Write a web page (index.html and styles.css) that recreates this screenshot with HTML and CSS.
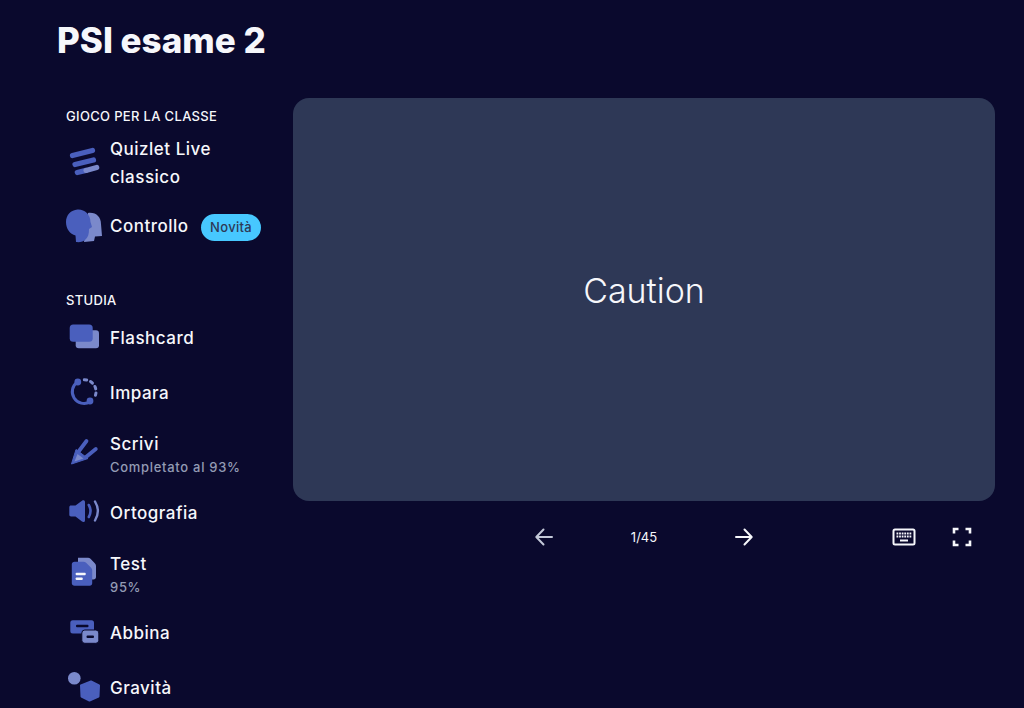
FILE: index.html
```html
<!DOCTYPE html>
<html lang="it">

<head>
  <meta charset="UTF-8">
  <meta name="viewport" content="width=device-width, initial-scale=1.0">
  <title>PSI esame 2</title>
  <link rel="stylesheet" href="styles.css">
</head>

<body>
  <h1 class="set-title">PSI esame 2</h1>

  <div class="layout">
    <nav class="sidebar">
      <div class="section">
        <div class="section-label">GIOCO PER LA CLASSE</div>
        <a href="#" class="mode mode-tall">
          <svg class="mode-icon" viewBox="0 0 36 34">
            <path class="stroke-dark" stroke-width="5.200" stroke-linecap="round" d="M6.500 9.500 26.500 4.500"/>
            <path class="stroke-dark" stroke-width="5.200" stroke-linecap="round" d="M9 18.500 27.500 14"/>
            <path class="stroke-dark" stroke-width="5.200" stroke-linecap="round" d="M11.300 26.500 20 24.400"/>
            <path class="stroke-light" stroke-width="5.200" stroke-linecap="round" d="M20 24.400 30.700 21.500"/>
          </svg>
          <span class="mode-name">Quizlet Live<br>classico</span>
        </a>
        <a href="#" class="mode">
          <svg class="mode-icon" viewBox="0 0 36 34">
            <path class="fill-light" d="M22 4c8-1 13 4 13 11l1 12-7 .5-1 4.500-10 1z"/>
            <path class="fill-dark" d="M11.500 .5c7-.5 13 5 13 12.500l1.500 5-3 2c0 5-1 8-3 10-2.500 3-7 3.500-10 3l-.5-6.500C4 25 0 20 0 13 0 6 5 1 11.500 .5z"/>
          </svg>
          <span class="mode-name">Controllo</span>
          <span class="badge">Novità</span>
        </a>
      </div>

      <div class="section section-study">
        <div class="section-label">STUDIA</div>
        <a href="#" class="mode">
          <svg class="mode-icon" viewBox="0 0 36 34">
            <rect class="fill-light" x="9.700" y="9.200" width="23.300" height="18" rx="3"/>
            <rect class="fill-dark" x="3.700" y="3.500" width="23" height="17.300" rx="3.500"/>
          </svg>
          <span class="mode-name">Flashcard</span>
        </a>
        <a href="#" class="mode">
          <svg class="mode-icon" viewBox="0 0 36 34">
            <path class="stroke-dark" stroke-width="3" d="M11.500 5.900A11.800 11.800 0 0 0 24 25.900"/>
            <circle class="fill-dark" cx="11.800" cy="6" r="3.400"/>
            <circle class="fill-dark" cx="24" cy="25" r="3.400"/>
            <path class="stroke-light" stroke-width="3" stroke-linecap="round" stroke-dasharray="2.500 4" d="M18.300 3.800A11.800 11.800 0 0 1 29.200 20"/>
          </svg>
          <span class="mode-name">Impara</span>
        </a>
        <a href="#" class="mode mode-sub">
          <svg class="mode-icon" viewBox="0 0 36 34">
            <path class="stroke-dark" stroke-width="3.800" stroke-linecap="round" d="M20.500 5 13 15M29.800 13 20 21"/>
            <path class="fill-dark" stroke="#4a5fbd" stroke-width="1" stroke-linejoin="round" d="M5.500 28 10 13.500 22 22.500z"/>
            <path class="fill-light" d="M8.500 25.500 11.500 18 17.500 22.500z"/>
          </svg>
          <span class="mode-text">
            <span class="mode-name">Scrivi</span>
            <span class="mode-progress">Completato al 93%</span>
          </span>
        </a>
        <a href="#" class="mode">
          <svg class="mode-icon" viewBox="0 0 36 34">
            <path class="fill-dark" d="M5 9.500h4.500L16 4.800c1.300-1 3-.4 3 1.400v18c0 1.800-1.700 2.400-3 1.400L9.500 20.500H5c-1 0-1.700-.7-1.700-1.700v-7.600C3.300 10.200 4 9.500 5 9.500z"/>
            <path class="stroke-dark" stroke-width="2.600" stroke-linecap="round" d="M22.800 9c2.300 4 2.300 8 0 12"/>
            <path class="stroke-light" stroke-width="2.400" stroke-linecap="round" d="M29 5.500c3.800 6.300 3.800 12.700 0 19"/>
          </svg>
          <span class="mode-name">Ortografia</span>
        </a>
        <a href="#" class="mode mode-sub">
          <svg class="mode-icon" viewBox="0 0 36 34">
            <path class="fill-light" d="M12 1.800h10c1 0 1.800.4 2.500 1l4.300 4.400c.8.800 1.200 1.800 1.200 2.800V21c0 1.500-1 2.500-2.500 2.500H12z"/>
            <path class="fill-dark" d="M8.500 5.700h9c1 0 1.900.4 2.600 1l5 5c.7.700 1.100 1.600 1.100 2.600v12.900c0 1.500-1 2.500-2.500 2.500H8.500c-1.500 0-2.700-1-2.700-2.500V8.200c0-1.500 1.200-2.500 2.700-2.500z"/>
            <rect class="fill-white" x="9.700" y="16.800" width="10" height="2.500" rx=".8"/>
            <rect class="fill-white" x="9.700" y="21.500" width="7" height="2.500" rx=".8"/>
          </svg>
          <span class="mode-text">
            <span class="mode-name">Test</span>
            <span class="mode-progress">95%</span>
          </span>
        </a>
        <a href="#" class="mode">
          <svg class="mode-icon" viewBox="0 0 36 34">
            <rect class="fill-dark" x="4.300" y="4.200" width="23.700" height="13.300" rx="2.500"/>
            <rect class="fill-bg" x="10" y="8.700" width="12.500" height="2.600" rx="1"/>
            <rect class="fill-light" stroke="#0a092d" stroke-width="1" x="15.800" y="14" width="17" height="13.300" rx="3"/>
            <rect class="fill-bg" x="20.500" y="19.500" width="7.500" height="2.600" rx="1"/>
          </svg>
          <span class="mode-name">Abbina</span>
        </a>
        <a href="#" class="mode">
          <svg class="mode-icon" viewBox="0 0 36 34">
            <circle class="fill-light" cx="8.300" cy="7.200" r="6.300"/>
            <path class="fill-dark" stroke="#4a5fbd" stroke-width="2" stroke-linejoin="round" d="M25 10.500 33 14.500 32.500 25.500 23.500 29.500 15.500 25.500 15 14.500z"/>
          </svg>
          <span class="mode-name">Gravità</span>
        </a>
      </div>
    </nav>

    <main class="viewer">
      <div class="card">Caution</div>
      <div class="controls">
        <div class="controls-left"></div>
        <div class="pager">
          <button class="icon-btn dim" type="button">
            <svg width="24" height="24" viewBox="0 0 24 24"><path d="M20 12H4.500M11.500 4.500 4.300 12l7.200 7.500"/></svg>
          </button>
          <span class="pager-count">1/45</span>
          <button class="icon-btn" type="button">
            <svg width="24" height="24" viewBox="0 0 24 24"><path d="M4 12h15.500M12.500 4.500l7.200 7.500-7.200 7.500"/></svg>
          </button>
        </div>
        <div class="tools">
          <button class="icon-btn" type="button">
            <svg width="24" height="24" viewBox="0 0 24 24">
              <rect x="1.500" y="4.500" width="21" height="15" rx="1.500" stroke-width="2"/>
              <path class="keys" stroke-width="2" stroke-dasharray="1.800 .8" d="M4.500 8.500h15M4.500 11.500h15"/>
              <path class="keys" stroke-width="2" d="M8 15.500h8"/>
            </svg>
          </button>
          <button class="icon-btn" type="button">
            <svg width="24" height="24" viewBox="0 0 24 24"><path class="thick" d="M4 8.500V4h4.500M15.500 4H20v4.500M20 15.500V20h-4.500M8.500 20H4v-4.500"/></svg>
          </button>
        </div>
      </div>
    </main>
  </div>
</body>

</html>
```

FILE: styles.css
```css
/* page */
html,
body {
  height: 100%;
}

body {
  font-family: Inter, Arial, sans-serif;
  background-color: #0a092d;
  color: #f6f7fb;
  margin: 0;
  overflow: hidden;
}

.set-title {
  font-size: 35px;
  font-weight: 800;
  line-height: 40px;
  margin: 0;
  padding: 20px 0 0 57px;
}

.layout {
  display: grid;
  grid-template-columns: 227px 702px;
  margin-left: 66px;
  margin-top: 38px;
}

/* sidebar */
.sidebar {
  padding-top: 7px;
}

.section-label {
  font-size: 13px;
  font-weight: 500;
  line-height: 22px;
  letter-spacing: 0.33px;
}

.section-study {
  margin-top: 36px;
}

.section-study .section-label {
  margin-bottom: -1px;
}

.mode {
  display: flex;
  align-items: center;
  gap: 8px;
  height: 55px;
  color: #f6f7fb;
  text-decoration: none;
}

.mode-tall {
  height: 71px;
}

.mode-sub {
  height: 65px;
}

.mode-icon {
  width: 36px;
  height: 34px;
  flex: none;
  overflow: visible;
}

.mode-name {
  font-size: 17px;
  font-weight: 500;
  line-height: 28px;
  letter-spacing: 0.5px;
}

.mode-text {
  display: flex;
  flex-direction: column;
  padding-top: 4px;
}

.mode-text .mode-name {
  line-height: 24px;
}

.mode-progress {
  font-size: 13px;
  font-weight: 500;
  line-height: 22px;
  color: #939bb4;
  letter-spacing: 0.7px;
}

.badge {
  background-color: #47c8ff;
  color: #2e3856;
  font-size: 13px;
  font-weight: 500;
  line-height: 27px;
  padding: 0 9.5px;
  border-radius: 14px;
  margin: 3px 0 0 4px;
  letter-spacing: 0.3px;
}

.fill-dark {
  fill: #4a5fbd;
}

.fill-light {
  fill: #7b89cb;
}

.fill-white {
  fill: #f6f7fb;
}

.fill-bg {
  fill: #0a092d;
}

.stroke-dark {
  fill: none;
  stroke: #4a5fbd;
}

.stroke-light {
  fill: none;
  stroke: #7b89cb;
}

/* card */
.card {
  height: 403px;
  background-color: #2e3856;
  border-radius: 16px;
  display: flex;
  align-items: center;
  justify-content: center;
  font-size: 34px;
  font-weight: 300;
  color: #f6f7fb;
  padding-bottom: 19px;
  box-sizing: border-box;
}

.controls {
  display: grid;
  grid-template-columns: 1fr 224px 1fr;
  align-items: center;
  height: 36px;
  margin-top: 18px;
}

.pager {
  display: flex;
  align-items: center;
  justify-content: space-between;
}

.pager-count {
  font-size: 13px;
  font-weight: 400;
}

.tools {
  display: flex;
  justify-content: flex-end;
  gap: 34px;
  padding-right: 21px;
}

.icon-btn {
  background: none;
  border: none;
  padding: 0;
  width: 24px;
  height: 24px;
  cursor: pointer;
}

.icon-btn svg {
  display: block;
  fill: none;
  stroke: #f6f7fb;
  stroke-width: 2;
  stroke-linecap: round;
  stroke-linejoin: round;
}

.icon-btn.dim svg {
  stroke: #c3c8d8;
}

.icon-btn .keys {
  stroke-linecap: butt;
}

.icon-btn .thick {
  stroke-width: 2.600;
  stroke-linecap: butt;
  stroke-linejoin: miter;
}
```
